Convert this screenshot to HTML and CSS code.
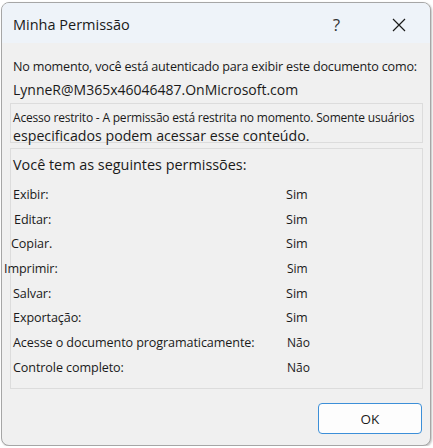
FILE: index.html
```html
<!DOCTYPE html>
<html lang="pt">
<head>
    <meta charset="UTF-8">
    <title>Minha Permissão</title>
    <link rel="stylesheet" href="styles.css">
</head>
<body>
    <div class="dialog">
        <div class="titlebar">
            <span class="title">Minha Permissão</span>
            <span class="help">?</span>
            <svg class="close" width="14" height="14" viewBox="0 0 14 14">
                <path d="M1 1 L13 13 M13 1 L1 13" stroke="#1a1a1a" stroke-width="1.2" fill="none"/>
            </svg>
        </div>
        <div class="content">
            <div class="intro">No momento, você está autenticado para exibir este documento como:</div>
            <div class="user">LynneR@M365x46046487.OnMicrosoft.com</div>
            <div class="box notice">
                <div class="notice-small">Acesso restrito - A permissão está restrita no momento. Somente usuários</div>
                <div class="notice-big">especificados podem acessar esse conteúdo.</div>
            </div>
            <div class="box perms">
                <div class="perms-head">Você tem as seguintes permissões:</div>
                <div class="row"><span class="label">Exibir:</span><span class="value">Sim</span></div>
                <div class="row"><span class="label shift-1">Editar:</span><span class="value">Sim</span></div>
                <div class="row"><span class="label shift-n2">Copiar.</span><span class="value">Sim</span></div>
                <div class="row"><span class="label shift-n9">Imprimir:</span><span class="value small">Sim</span></div>
                <div class="row"><span class="label">Salvar:</span><span class="value">Sim</span></div>
                <div class="row"><span class="label">Exportação:</span><span class="value">Sim</span></div>
                <div class="row"><span class="label">Acesse o documento programaticamente:</span><span class="value small">Não</span></div>
                <div class="row"><span class="label">Controle completo:</span><span class="value small">Não</span></div>
            </div>
            <div class="actions">
                <button class="ok">OK</button>
            </div>
        </div>
    </div>
</body>
</html>
```

FILE: styles.css
```css
body {
    margin: 0;
    background: #ffffff;
    font-family: "Open Sans", "Noto Sans", sans-serif;
    color: #1a1a1a;
}

.dialog {
    margin: 2px 2px 0 1px;
    height: 444px;
    box-sizing: border-box;
    border: 1px solid #a6a6a6;
    border-radius: 8px;
    background: #f0f0f0;
    overflow: hidden;
    display: flex;
    flex-direction: column;
    box-shadow: 1px 1px 2px rgba(0, 0, 0, 0.25);
}

.titlebar {
    height: 40px;
    flex: none;
    background: #eef3f9;
    display: flex;
    align-items: center;
    padding: 0 24px 0 11px;
}

.title {
    font-size: 14.5px;
    flex: 1;
    padding-top: 3px;
}

.help {
    font-size: 17px;
    color: #333;
    margin-right: 52px;
    padding-top: 3px;
}

.close {
    margin-top: 3px;
}

.content {
    flex: 1;
    display: flex;
    flex-direction: column;
    padding: 0 7px 0 8px;
}

.content > * {
    flex-shrink: 0;
}

.intro {
    font-size: 12.6px;
    letter-spacing: -0.2px;
    margin: 15px 0 0 3px;
    white-space: nowrap;
}

.user {
    font-size: 14px;
    margin: 5px 0 0 3px;
}

.box {
    border: 1px solid #dcdcdc;
    padding: 0 2px;
    box-sizing: border-box;
}

.notice {
    margin-top: 4px;
    height: 40px;
}

.notice-small {
    font-size: 12px;
    letter-spacing: -0.2px;
    margin-top: 5px;
    white-space: nowrap;
}

.notice-big {
    font-size: 14.2px;
    margin-top: 0;
}

.perms {
    margin-top: 5px;
    height: 241px;
    padding-top: 6px;
}

.perms-head {
    font-size: 14.4px;
    margin-bottom: 8px;
}

.row {
    display: flex;
    height: 24.7px;
    align-items: center;
    font-size: 12.6px;
}

.label {
    width: 273px;
    white-space: nowrap;
    letter-spacing: -0.1px;
}

.shift-1 {
    margin-left: 1px;
    width: 272px;
}

.shift-n2 {
    margin-left: -2px;
    width: 275px;
}

.shift-n9 {
    margin-left: -9px;
    width: 282px;
}

.value {
    font-size: 12.6px;
}

.value.small {
    font-size: 12px;
    padding-left: 1px;
}

.actions {
    display: flex;
    justify-content: flex-end;
    margin-top: 14px;
}

.ok {
    width: 104px;
    height: 31px;
    margin-right: 1px;
    background: #fdfdfd;
    border: 1px solid #3c8fd8;
    border-radius: 4px;
    font-family: "Open Sans", "Noto Sans", sans-serif;
    font-size: 13.5px;
    color: #1a1a1a;
}
```
